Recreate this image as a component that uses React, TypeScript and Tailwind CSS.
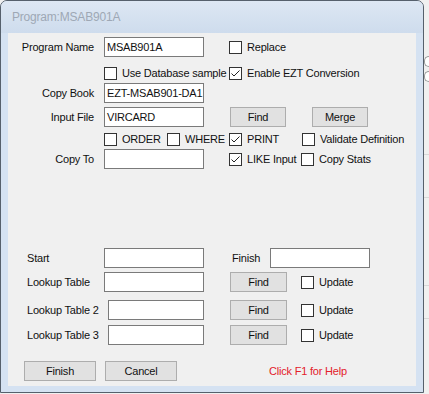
import type { ReactNode } from 'react';

const font = { fontFamily: '"Liberation Sans", Arial, sans-serif' };

function Box({ checked }: { checked?: boolean }) {
  return (
    <span className="w-[13px] h-[13px] shrink-0 border border-[#333333] bg-white flex items-center justify-center">
      {checked && (
        <svg width="11" height="11" viewBox="0 0 11 11">
          <path d="M1.5 5.5 L4 8 L9.5 2.5" fill="none" stroke="#222" strokeWidth="1" />
        </svg>
      )}
    </span>
  );
}

function Check({ label, checked, w }: { label: string; checked?: boolean; w: string }) {
  return (
    <div className={`${w} shrink-0 flex items-center gap-[5px] whitespace-nowrap`}>
      <Box checked={checked} />
      <span>{label}</span>
    </div>
  );
}

function Field({ value, w = 'w-[100px]' }: { value?: string; w?: string }) {
  return (
    <div className={`${w} h-[20px] shrink-0 bg-white border border-[#7a7a7a] pl-[2px] flex items-center overflow-hidden whitespace-nowrap`}>
      {value}
    </div>
  );
}

function Btn({ children, w = 'w-[56px]' }: { children: ReactNode; w?: string }) {
  return (
    <div className={`${w} h-[20px] shrink-0 bg-[#e1e1e1] border border-[#adadad] flex items-center justify-center`}>
      {children}
    </div>
  );
}

function Label({ children, w = 'w-[86px]', left }: { children: ReactNode; w?: string; left?: boolean }) {
  return <div className={`${w} shrink-0 whitespace-nowrap ${left ? 'text-left' : 'text-right'}`}>{children}</div>;
}

export default function App() {
  return (
    <div className="w-[429px] h-[394px] bg-[#f0f0f0] flex text-[11px] tracking-[-0.2px] text-[#111] leading-none" style={font}>
      {/* Dialog window */}
      <div className="w-[424px] h-[393px] shrink-0 flex flex-col border border-[#56606c] rounded-t-[7px] bg-[#d5e2f2] overflow-hidden">
        <div className="h-[32px] shrink-0 flex items-center pl-[11px] bg-gradient-to-b from-[#dde7f3] to-[#cedced] text-[#9ea8b5] text-[12px]">
          Program:MSAB901A
        </div>

        <div className="mx-[7px] h-[353px] shrink-0 bg-[#f0f0f0] flex flex-col">
          <div className="mt-[4px] h-[20px] flex items-center">
            <Label>Program Name</Label>
            <div className="ml-[10px]"><Field value="MSAB901A" /></div>
            <div className="ml-[25px]"><Check label="Replace" w="w-[100px]" /></div>
          </div>

          <div className="mt-[6px] h-[20px] flex items-center pl-[96px]">
            <Check label="Use Database sample" w="w-[125px]" />
            <Check label="Enable EZT Conversion" checked w="w-[150px]" />
          </div>

          <div className="h-[20px] flex items-center">
            <Label>Copy Book</Label>
            <div className="ml-[10px]"><Field value="EZT-MSAB901-DA1" /></div>
          </div>

          <div className="mt-[4px] h-[20px] flex items-center">
            <Label>Input File</Label>
            <div className="ml-[10px]"><Field value="VIRCARD" /></div>
            <div className="ml-[26px]"><Btn>Find</Btn></div>
            <div className="ml-[26px]"><Btn>Merge</Btn></div>
          </div>

          <div className="mt-[2px] h-[20px] flex items-center pl-[96px]">
            <Check label="ORDER" w="w-[63px]" />
            <Check label="WHERE" w="w-[62px]" />
            <Check label="PRINT" checked w="w-[73px]" />
            <Check label="Validate Definition" w="w-[100px]" />
          </div>

          <div className="h-[20px] flex items-center">
            <Label>Copy To</Label>
            <div className="ml-[10px]"><Field /></div>
            <div className="ml-[25px] flex">
              <Check label="LIKE Input" checked w="w-[72px]" />
              <Check label="Copy Stats" w="w-[80px]" />
            </div>
          </div>

          <div className="mt-[79px] h-[20px] flex items-center pl-[19px]">
            <Label left w="w-[77px]">Start</Label>
            <Field />
            <div className="ml-[28px]"><Label left w="w-[38px]">Finish</Label></div>
            <Field />
          </div>

          <div className="mt-[4px] h-[20px] flex items-center pl-[19px]">
            <Label left w="w-[77px]">Lookup Table</Label>
            <Field />
            <div className="ml-[26px]"><Btn w="w-[57px]">Find</Btn></div>
            <div className="ml-[14px]"><Check label="Update" w="w-[70px]" /></div>
          </div>

          <div className="mt-[8px] h-[20px] flex items-center pl-[19px]">
            <Label left w="w-[81px]">Lookup Table 2</Label>
            <Field w="w-[96px]" />
            <div className="ml-[26px]"><Btn w="w-[57px]">Find</Btn></div>
            <div className="ml-[14px]"><Check label="Update" w="w-[70px]" /></div>
          </div>

          <div className="mt-[5px] h-[20px] flex items-center pl-[19px]">
            <Label left w="w-[81px]">Lookup Table 3</Label>
            <Field w="w-[96px]" />
            <div className="ml-[26px]"><Btn w="w-[57px]">Find</Btn></div>
            <div className="ml-[14px]"><Check label="Update" w="w-[70px]" /></div>
          </div>

          <div className="mt-[16px] h-[20px] flex items-center pl-[16px]">
            <Btn w="w-[72px]">Finish</Btn>
            <div className="ml-[9px]"><Btn w="w-[72px]">Cancel</Btn></div>
            <div className="ml-[92px] text-[#e3202a] whitespace-nowrap">Click F1 for Help</div>
          </div>
        </div>
      </div>

      {/* window behind, peeking at the right edge */}
      <div className="flex-1 flex flex-col">
        <div className="mt-[56px] h-[11px] bg-white border-y border-l border-[#9a9a9a] rounded-l-[5px]" />
        <div className="mt-[4px] h-[11px] bg-white border-y border-l border-[#9a9a9a] rounded-l-[5px]" />
        <div className="mt-[72px] h-px bg-[#d8d8d8]" />
        <div className="mt-[42px] h-px bg-[#d8d8d8]" />
        <div className="mt-[87px] h-px bg-[#d8d8d8]" />
        <div className="mt-[32px] h-px bg-[#d8d8d8]" />
      </div>
    </div>
  );
}
